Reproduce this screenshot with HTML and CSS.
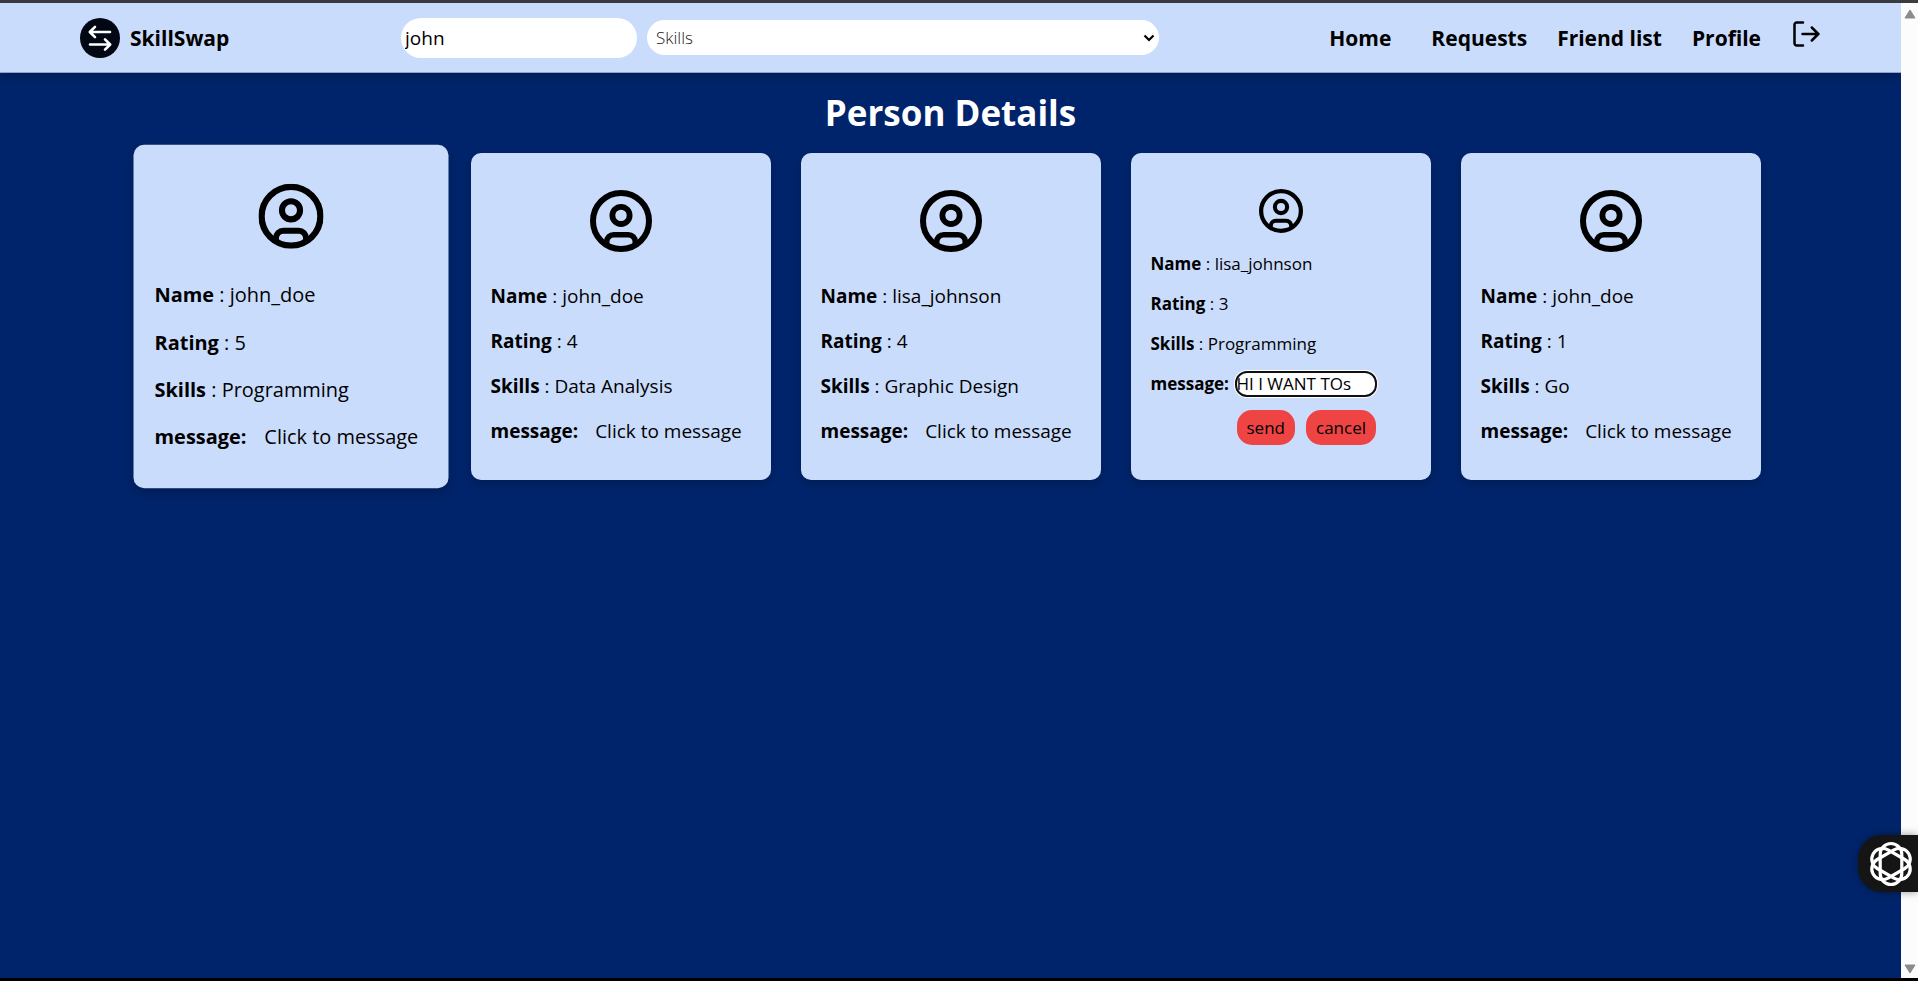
FILE: index.html
```
<!DOCTYPE html>
<html lang="en">
<head>
<meta charset="utf-8">
<title>SkillSwap</title>
<link rel="stylesheet" href="styles.css">
</head>
<body>
<svg class="sprite" aria-hidden="true">
  <symbol id="user" viewBox="0 0 62 62">
    <g fill="none" stroke="#000" stroke-width="5">
      <circle cx="31" cy="31" r="28" stroke-width="6"/>
      <circle cx="31" cy="25.4" r="8.6" stroke-width="5.8"/>
      <path d="M16.7 55V51.8a7 7 0 0 1 7-7h14.6a7 7 0 0 1 7 7V55" stroke-width="5.6"/>
    </g>
  </symbol>
</svg>
<div class="window">
  <div class="page">
    <header class="header">
      <a class="brand" href="#">
        <svg class="brand-icon" viewBox="0 0 40 40" aria-hidden="true">
          <circle cx="20" cy="20" r="20" fill="#020813"/>
          <g fill="none" stroke="#fff" stroke-width="2.6" stroke-linecap="round" stroke-linejoin="round">
            <path d="M30 14H10M15 8.800L9.800 14l5.200 5.200"/>
            <path d="M10 26.500h20M25 21.300l5.200 5.200-5.200 5.200"/>
          </g>
        </svg>
        <span>SkillSwap</span>
      </a>
      <form class="search">
        <input class="search-input" type="text" value="john" aria-label="Search people">
        <div class="select-wrap">
          <select class="search-select" aria-label="Skills"><option>Skills</option></select>
          <svg class="chevron" viewBox="0 0 12 8" aria-hidden="true"><path d="M1.500 1.500L6 6l4.500-4.500" fill="none" stroke="#000" stroke-width="2.200"/></svg>
        </div>
      </form>
      <nav class="nav">
        <a class="nav-home" href="#">Home</a>
        <a href="#">Requests</a>
        <a href="#">Friend list</a>
        <a href="#">Profile</a>
        <button class="logout" type="button" aria-label="Log out">
          <svg viewBox="0 0 28 28" aria-hidden="true"><g fill="none" stroke="#000" stroke-width="2.500" stroke-linecap="round" stroke-linejoin="round"><path d="M11 2.500H4.800A2.300 2.300 0 0 0 2.500 4.800v18.400A2.300 2.300 0 0 0 4.800 25.500H11M10.500 14h16M19.800 7.500l6.500 6.500-6.500 6.500"/></g></svg>
        </button>
      </nav>
    </header>
    <main>
      <h1 class="title">Person Details</h1>
      <div class="cards">
        <article class="card card-hover">
          <svg class="avatar" aria-hidden="true"><use href="#user"/></svg>
          <p><b>Name</b> : john_doe</p>
          <p><b>Rating</b> : 5</p>
          <p><b>Skills</b> : Programming</p>
          <div class="message"><b>message:</b><button class="open" type="button">Click to message</button></div>
        </article>
        <article class="card">
          <svg class="avatar" aria-hidden="true"><use href="#user"/></svg>
          <p><b>Name</b> : john_doe</p>
          <p><b>Rating</b> : 4</p>
          <p><b>Skills</b> : Data Analysis</p>
          <div class="message"><b>message:</b><button class="open" type="button">Click to message</button></div>
        </article>
        <article class="card">
          <svg class="avatar" aria-hidden="true"><use href="#user"/></svg>
          <p><b>Name</b> : lisa_johnson</p>
          <p><b>Rating</b> : 4</p>
          <p><b>Skills</b> : Graphic Design</p>
          <div class="message"><b>message:</b><button class="open" type="button">Click to message</button></div>
        </article>
        <article class="card card-compose">
          <svg class="avatar" aria-hidden="true"><use href="#user"/></svg>
          <p><b>Name</b> : lisa_johnson</p>
          <p><b>Rating</b> : 3</p>
          <p><b>Skills</b> : Programming</p>
          <form class="compose">
            <label for="msg">message:</label>
            <input id="msg" type="text" value="HI I WANT TOs">
            <div class="actions"><button type="button">send</button><button type="button">cancel</button></div>
          </form>
        </article>
        <article class="card">
          <svg class="avatar" aria-hidden="true"><use href="#user"/></svg>
          <p><b>Name</b> : john_doe</p>
          <p><b>Rating</b> : 1</p>
          <p><b>Skills</b> : Go</p>
          <div class="message"><b>message:</b><button class="open" type="button">Click to message</button></div>
        </article>
      </div>
    </main>
  </div>
  <div class="scrollbar" aria-hidden="true">
    <svg viewBox="0 0 12 10"><path d="M6 1l5 8H1z" fill="#8b8b8b" stroke="#8b8b8b" stroke-linejoin="round"/></svg>
    <svg viewBox="0 0 12 10"><path d="M6 9l5-8H1z" fill="#8b8b8b" stroke="#8b8b8b" stroke-linejoin="round"/></svg>
  </div>
  <button class="assistant" type="button" aria-label="Assistant">
    <svg viewBox="-23 -23 46 46" aria-hidden="true"><g fill="none" stroke="#fff" stroke-width="3.200">
      <rect x="-10.800" y="-20.500" width="21.600" height="41" rx="10.800"/>
      <rect x="-10.800" y="-20.500" width="21.600" height="41" rx="10.800" transform="rotate(60)"/>
      <rect x="-10.800" y="-20.500" width="21.600" height="41" rx="10.800" transform="rotate(120)"/>
    </g></svg>
  </button>
</div>
</body>
</html>
```
FILE: styles.css
```
* { box-sizing: border-box; }
body {
  margin: 0;
  font-family: "Open Sans", "Noto Sans", sans-serif;
  color: #000;
}
button, input, select { font: inherit; color: inherit; border: 0; padding: 0; }
button { background: none; cursor: pointer; }
a { color: inherit; text-decoration: none; }
.sprite { display: none; }

.window {
  display: flex;
  min-height: 100vh;
  border-top: 3px solid #3c3c40;
  border-bottom: 3px solid #000;
  background: #00246b;
}
.page { flex: 1; min-width: 0; }

.header {
  display: flex;
  align-items: center;
  height: 70px;
  padding: 0 80px;
  border-bottom: 1px solid #8fa2cc;
  background: #cadcfc;
  box-shadow: 0 4px 10px rgba(0, 0, 0, 0.2);
}
.brand {
  display: flex;
  align-items: center;
  gap: 10px;
  width: 321px;
  font-size: 21px;
  font-weight: 700;
}
.brand-icon { width: 40px; height: 40px; }
.search { display: flex; align-items: center; gap: 10px; }
.search-input {
  width: 236px;
  height: 40px;
  padding: 0 4px;
  border-radius: 20px;
  background: #fff;
  font-size: 19px;
}
.select-wrap { position: relative; }
.search-select {
  appearance: none;
  display: block;
  width: 512px;
  height: 35px;
  padding: 0 9px;
  border-radius: 18px;
  background: #fff;
  color: #222;
  font-size: 17px;
  font-weight: 300;
}
.chevron {
  position: absolute;
  top: 14px;
  right: 4px;
  width: 12px;
  height: 8px;
  pointer-events: none;
}
.nav {
  display: flex;
  align-items: center;
  gap: 30px;
  margin-left: auto;
  font-size: 21px;
  font-weight: 700;
}
.nav-home { margin-right: 10px; }
.logout { padding-bottom: 8px; }
.logout svg { display: block; width: 30px; height: 28px; }

.title {
  margin: 10px 0;
  color: #fff;
  font-size: 35px;
  line-height: 60px;
  font-weight: 700;
  text-align: center;
}
.cards {
  display: flex;
  flex-wrap: wrap;
  justify-content: center;
  gap: 30px;
}
.card {
  width: 300px;
  min-height: 327px;
  padding: 37px 20px 20px;
  border-radius: 10px;
  background: #cadcfc;
  box-shadow: 0 4px 10px rgba(0, 0, 0, 0.2);
  font-size: 19px;
  line-height: 45px;
  white-space: nowrap;
}
.card-hover { transform: scale(1.05); }
.avatar { display: block; width: 62px; height: 62px; margin: 0 auto 22px; }
.card p { margin: 0; }
.message { display: flex; gap: 17px; }

.card-compose { padding-top: 36px; font-size: 17px; line-height: 40px; }
.card-compose .avatar { width: 44px; height: 44px; margin-bottom: 11px; }
.compose {
  display: grid;
  grid-template-columns: 76px 138px;
  column-gap: 10px;
  align-items: center;
}
.compose label { font-weight: 700; }
.compose input {
  width: 100%;
  height: 22px;
  border-radius: 10px;
  background: #fff;
  outline: 2px solid #101010;
  box-shadow: 0 0 0 3px #fff;
}
.actions { grid-column: 2; display: flex; gap: 11px; margin-top: 6px; }
.actions button {
  height: 35px;
  padding: 0 10px;
  border-radius: 15px;
  background: #ef4444;
  line-height: 35px;
}

.scrollbar {
  display: flex;
  flex-direction: column;
  align-items: center;
  justify-content: space-between;
  width: 17px;
  padding: 6px 0 4px;
  background: #fcfcfc;
}
.scrollbar svg { width: 12px; height: 10px; }

.assistant {
  position: fixed;
  right: 0;
  bottom: 89px;
  width: 60px;
  height: 57px;
  padding-left: 10px;
  border-radius: 24px 0 0 24px;
  background: #151515;
  box-shadow: 0 0 8px rgba(0, 0, 0, 0.4);
}
.assistant svg { display: block; width: 46px; height: 46px; }
```
